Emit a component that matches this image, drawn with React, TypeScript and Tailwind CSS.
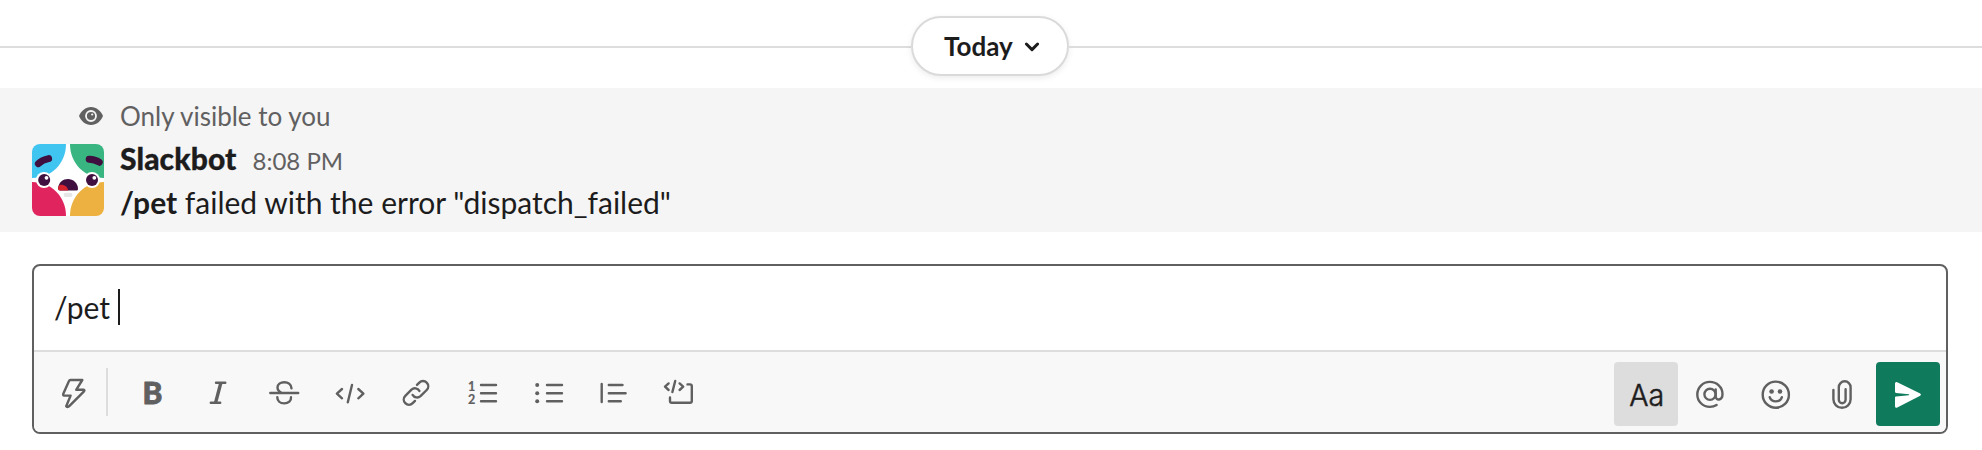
import type { ReactNode } from "react";

const font = "font-['Lato','Noto_Sans',sans-serif]";

function ToolIcon({ children, label }: { children: ReactNode; label: string }) {
  return (
    <button aria-label={label} className="size-16 shrink-0 text-[#616061]">
      <svg
        viewBox="0 0 64 64"
        className="size-16"
        fill="none"
        stroke="currentColor"
        strokeWidth="2.4"
        strokeLinecap="round"
        strokeLinejoin="round"
      >
        {children}
      </svg>
    </button>
  );
}

function Avatar() {
  return (
    <svg viewBox="0 0 72 72" className="size-18 shrink-0 rounded-lg bg-white">
      <path d="M0 0H34C34 19 20 34 0 34Z" fill="#40c4f0" />
      <path d="M72 0H38C38 19 52 34 72 34Z" fill="#39b582" />
      <path d="M0 38C20 38 34 53 34 72H0Z" fill="#e0245e" />
      <path d="M72 38C52 38 38 53 38 72H72Z" fill="#ecb140" />
      <circle cx="12" cy="36" r="8" fill="#fff" />
      <circle cx="60" cy="36" r="8" fill="#fff" />
      <circle cx="12.2" cy="36" r="6" fill="#3f0f3f" />
      <circle cx="60" cy="36" r="6" fill="#3f0f3f" />
      <circle cx="14.5" cy="33.8" r="1.9" fill="#fff" />
      <circle cx="62.3" cy="33.8" r="1.9" fill="#fff" />
      <path d="M6.4 19.6Q10 15.8 16.6 14.6M57.2 15.2Q63 15.4 67.2 18.2" stroke="#3f0f3f" strokeWidth="7" strokeLinecap="round" fill="none" />
      <path d="M26 44C27 38 31 35 36 35C41 35 46 39 46 45Q46 46.6 44.5 46.6H28Q26 46.6 26 44Z" fill="#3f0f3f" />
      <path d="M26 44Q26.5 41.5 28 40.8C32 40.2 36 42.5 36 46.6H28Q26 46.6 26 44Z" fill="#d7232e" />
      <rect x="31.7" y="48.8" width="8.8" height="4.2" rx="2" fill="#e6e6e6" />
    </svg>
  );
}

function DayDivider() {
  return (
    <div className="flex h-22 items-start pt-4">
      <div className="mt-[30px] h-0.5 w-[911px] bg-[#dddddd]" />
      <button className="flex h-15 w-[158px] items-center rounded-full border-2 border-[#dadada] bg-white pl-[31px] text-[26px] leading-none font-bold text-[#1d1c1d] shadow-[0_2px_6px_rgba(0,0,0,0.08)]">
        <span>Today</span>
        <svg viewBox="0 0 16 12" className="mt-px ml-[11px] h-3 w-4" fill="none" stroke="currentColor" strokeWidth="3" strokeLinecap="round" strokeLinejoin="round">
          <path d="M2.4 3L8 8.6L13.6 3" />
        </svg>
      </button>
      <div className="mt-[30px] h-0.5 flex-1 bg-[#dddddd]" />
    </div>
  );
}

function Message() {
  return (
    <div className="h-36 bg-[#f5f5f5] px-8 pt-2.5 text-[#1d1c1d]">
      <div className="flex h-9 items-center text-[26px] leading-none text-[#616061]">
        <div className="flex w-[71px] justify-end">
          <svg viewBox="0 0 24 18" className="h-[18px] w-6">
            <path d="M0 9C2 4 6.5 0 12 0S22 4 24 9C22 14 17.5 18 12 18S2 14 0 9Z" fill="#616061" />
            <circle cx="12" cy="9" r="5" fill="#616061" stroke="#f5f5f5" strokeWidth="1.8" />
            <circle cx="13.2" cy="7.5" r="1.1" fill="#f5f5f5" />
          </svg>
        </div>
        <span className="ml-[17px]">Only visible to you</span>
      </div>
      <div className="flex pt-2.5">
        <Avatar />
        <div className="ml-4">
          <div className="-mt-0.5 flex h-[38px] items-baseline leading-8">
            <span className="text-[30px] font-black tracking-[0.1px] [-webkit-text-stroke:0.3px_#1d1c1d]">Slackbot</span>
            <span className="ml-4 text-[24px] text-[#616061]">8:08 PM</span>
          </div>
          <div className="h-11 text-[30px] leading-11">
            <b>/pet</b> failed with the error "dispatch_failed"
          </div>
        </div>
      </div>
    </div>
  );
}

function Composer() {
  return (
    <div className="mt-8 mr-[34px] ml-8 flex h-[170px] flex-col overflow-hidden rounded-lg border-2 border-[#616061] bg-white">
      <div className="flex h-21 shrink-0 items-center pb-[3px] pl-5 text-[30px] text-[#1d1c1d]">
        <span className="leading-none whitespace-pre">/pet </span>
        <span className="h-9 w-0.5 bg-[#1d1c1d]" />
      </div>
      <div className="flex h-[82px] shrink-0 items-start border-t-2 border-[#dddddd] bg-[#f8f8f8] px-1.5 pt-2.5">
        <ToolIcon label="Shortcuts">
          <path d="M30.3 18H42.3L36.2 27.8H43.6Q45 28 44 29.3L29 44.3Q27 45.8 26.2 44.3L30.6 33.6H24Q22.8 33.2 23.3 31.8L29 19Q29.4 18 30.3 18Z" />
        </ToolIcon>
        <div className="mt-1.5 mr-3 ml-0.5 h-12 w-0.5 bg-[#dddddd]" />
        <div className="flex gap-0.5">
          <ToolIcon label="Bold">
            <text x="22.6" y="41.7" fill="currentColor" strokeWidth="0.8" className="font-['Lato',sans-serif] text-[30px] font-black">B</text>
          </ToolIcon>
          <ToolIcon label="Italic">
            <path d="M30 20.8H39.3M24.8 40.8H34.2" />
            <path d="M34.8 21L29.6 40.6" strokeWidth="3.4" strokeLinecap="butt" />
          </ToolIcon>
          <ToolIcon label="Strikethrough">
            <path d="M18.3 31H46.2M39.5 26.4C39.2 22.3 36 20.2 32.3 20.2C28.3 20.2 25.5 22.3 25.5 25.5C25.5 28.2 27.3 29.8 30 31M25.3 35.2C25.3 39 28 41.4 32.2 41.4C36.5 41.4 39.4 39 39 35.2" />
          </ToolIcon>
          <ToolIcon label="Code">
            <path d="M24 27L18.9 31.7L24 36.3M34 23L29.8 40.3M40.3 27L45.4 31.7L40.3 36.3" />
          </ToolIcon>
          <ToolIcon label="Link">
            <path d="M33 22.9L35.3 20.6A5.2 5.2 0 0 1 42.7 28L36.5 34.2A5.2 5.2 0 0 1 28.6 32.9M31 38.9L28.7 41.2A5.2 5.2 0 0 1 21.3 33.8L27.5 27.6A5.2 5.2 0 0 1 35.4 28.9" />
          </ToolIcon>
          <ToolIcon label="Ordered list">
            <path d="M31 23H46M31 31.2H46M31 39.3H46" />
            <text x="18" y="29" fill="currentColor" strokeWidth="0.2" className="font-['Lato',sans-serif] text-[12.5px] font-bold">1</text>
            <text x="18" y="42" fill="currentColor" strokeWidth="0.2" className="font-['Lato',sans-serif] text-[12.5px] font-bold">2</text>
          </ToolIcon>
          <ToolIcon label="Bulleted list">
            <path d="M31 23H46M31 31.2H46M31 39.3H46" />
            <g fill="currentColor" stroke="none">
              <circle cx="21.2" cy="23" r="2" />
              <circle cx="21.2" cy="31.2" r="2" />
              <circle cx="21.2" cy="39.3" r="2" />
            </g>
          </ToolIcon>
          <ToolIcon label="Blockquote">
            <path d="M19.7 22V40M26.8 23H40.5M26.8 31.2H43.6M26.8 39.3H38.8" />
          </ToolIcon>
          <ToolIcon label="Code block">
            <path d="M20.6 21.4L17 24.7L20.6 28M27.2 19L24.4 30M31.6 21.4L35.2 24.7L31.6 28M39.5 22.4H42Q43.8 22.4 43.8 24.2V39Q43.8 40.8 42 40.8H23.8Q22 40.8 22 39V35.4" />
          </ToolIcon>
        </div>
        <div className="ml-auto flex">
          <div className="flex gap-0.5">
            <button aria-label="Formatting" className="size-16 rounded bg-[#dddddd] text-[#1d1c1d]">
              <svg viewBox="0 0 64 64" className="size-16">
                <text x="15.2" y="43.9" fill="currentColor" stroke="currentColor" strokeWidth="0.5" textLength="35" lengthAdjust="spacingAndGlyphs" className="font-['Inter',sans-serif] text-[30px] font-light">Aa</text>
              </svg>
            </button>
            <ToolIcon label="Mention">
              <circle cx="30" cy="32.3" r="5.6" />
              <path d="M35.7 27.4V34.2C35.7 39.1 42.5 38.8 42.5 32C42.5 25 36.7 19.9 29.8 19.9A12.5 12.5 0 0 0 29.8 44.9C32.4 44.9 34.6 44.3 36.6 43" />
            </ToolIcon>
            <ToolIcon label="Emoji">
              <circle cx="29.8" cy="32.7" r="13.1" />
              <circle cx="25.6" cy="29.5" r="2.3" fill="currentColor" stroke="none" />
              <circle cx="34" cy="29.5" r="2.3" fill="currentColor" stroke="none" />
              <path d="M23.7 35.2C25.5 40.8 34.1 40.8 35.9 35.2" />
            </ToolIcon>
            <ToolIcon label="Attach">
              <path d="M21.4 28V37.2A8.6 8.6 0 0 0 38.6 37.2V25.2A5.9 5.9 0 0 0 26.8 25.2V37.8A3.4 3.4 0 0 0 33.6 37.8V27.2" />
            </ToolIcon>
          </div>
          <button aria-label="Send" className="size-16 rounded bg-[#0f7b5c] text-white">
            <svg viewBox="0 0 64 64" className="size-16" fill="currentColor">
              <path d="M19 21.5Q19.2 19.2 21.3 20.2L44.2 31.6Q45.8 32.7 44.2 33.8L21.3 45.4Q19.2 46.4 19 44.2V35.6Q19 34.7 20 34.5L32.8 33.2Q33.8 32.7 32.8 32.2L20 30.9Q19 30.7 19 29.8Z" />
            </svg>
          </button>
        </div>
      </div>
    </div>
  );
}

export default function App() {
  return (
    <div className={`h-[450px] w-full overflow-hidden bg-white ${font}`}>
      <DayDivider />
      <Message />
      <Composer />
    </div>
  );
}
